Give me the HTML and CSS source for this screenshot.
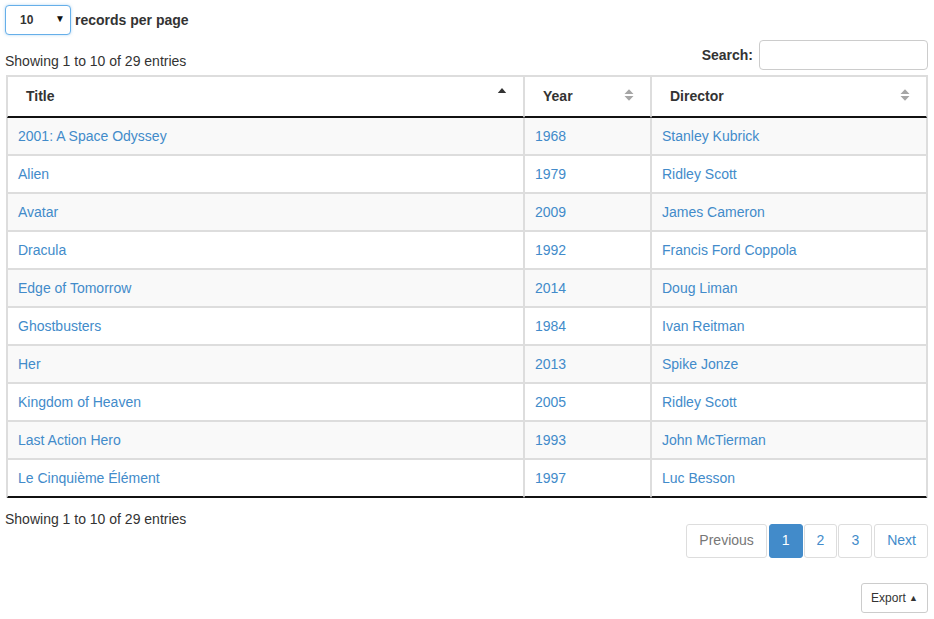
FILE: index.html
```html
<!DOCTYPE html>
<html>
<head>
<meta charset="utf-8">
<link rel="stylesheet" href="styles.css">
</head>
<body>
<div class="wrapper">
  <div class="length-row">
    <div class="select-wrap">
      <select class="length-select"><option>10</option><option>25</option><option>50</option></select>
      <span class="select-arrow">▼</span>
    </div>
    <span class="length-label">records per page</span>
  </div>
  <div class="top-row">
    <div class="info info-top">Showing 1 to 10 of 29 entries</div>
    <label class="search">Search: <input class="search-input" type="text"></label>
  </div>
  <table class="grid">
    <thead>
      <tr>
        <th class="col-title"><div class="th-in"><span>Title</span>
          <svg class="sort" width="10" height="12" viewBox="0 0 10 12"><path d="M0.8 6 L5 1 L9.2 6 Z" fill="#333"/></svg></div></th>
        <th class="col-year"><div class="th-in"><span>Year</span>
          <svg class="sort" width="10" height="12" viewBox="0 0 10 12"><path d="M0.5 5 L5 0.3 L9.5 5 Z M0.5 7 L5 11.7 L9.5 7 Z" fill="#a6a6a6"/></svg></div></th>
        <th class="col-director"><div class="th-in"><span>Director</span>
          <svg class="sort" width="10" height="12" viewBox="0 0 10 12"><path d="M0.5 5 L5 0.3 L9.5 5 Z M0.5 7 L5 11.7 L9.5 7 Z" fill="#a6a6a6"/></svg></div></th>
      </tr>
    </thead>
    <tbody>
      <tr class="odd"><td><a href="#">2001: A Space Odyssey</a></td><td><a href="#">1968</a></td><td><a href="#">Stanley Kubrick</a></td></tr>
      <tr><td><a href="#">Alien</a></td><td><a href="#">1979</a></td><td><a href="#">Ridley Scott</a></td></tr>
      <tr class="odd"><td><a href="#">Avatar</a></td><td><a href="#">2009</a></td><td><a href="#">James Cameron</a></td></tr>
      <tr><td><a href="#">Dracula</a></td><td><a href="#">1992</a></td><td><a href="#">Francis Ford Coppola</a></td></tr>
      <tr class="odd"><td><a href="#">Edge of Tomorrow</a></td><td><a href="#">2014</a></td><td><a href="#">Doug Liman</a></td></tr>
      <tr><td><a href="#">Ghostbusters</a></td><td><a href="#">1984</a></td><td><a href="#">Ivan Reitman</a></td></tr>
      <tr class="odd"><td><a href="#">Her</a></td><td><a href="#">2013</a></td><td><a href="#">Spike Jonze</a></td></tr>
      <tr><td><a href="#">Kingdom of Heaven</a></td><td><a href="#">2005</a></td><td><a href="#">Ridley Scott</a></td></tr>
      <tr class="odd"><td><a href="#">Last Action Hero</a></td><td><a href="#">1993</a></td><td><a href="#">John McTierman</a></td></tr>
      <tr class="last"><td><a href="#">Le Cinquième Élément</a></td><td><a href="#">1997</a></td><td><a href="#">Luc Besson</a></td></tr>
    </tbody>
  </table>
  <div class="bottom-row">
    <div class="info info-bottom">Showing 1 to 10 of 29 entries</div>
    <ul class="pagination">
      <li class="page disabled">Previous</li>
      <li class="page active">1</li>
      <li class="page">2</li>
      <li class="page">3</li>
      <li class="page next">Next</li>
    </ul>
  </div>
  <div class="export-row">
    <button class="export-btn">Export <span class="caret">▲</span></button>
  </div>
</div>
</body>
</html>
```

FILE: styles.css
```css
* { box-sizing: border-box; }
html, body { margin: 0; padding: 0; background: #fff; }
body {
  font-family: "Liberation Sans", Arial, sans-serif;
  font-size: 14px;
  line-height: 20px;
  color: #333;
}
.wrapper { padding: 5px 6px 0 5px; width: 934px; }

.length-row { display: flex; align-items: center; height: 30px; }
.select-wrap { position: relative; width: 66px; height: 30px; }
.length-select {
  appearance: none;
  -webkit-appearance: none;
  width: 66px;
  height: 30px;
  border: 1px solid #66afe9;
  border-radius: 4px;
  box-shadow: 0 0 3px rgba(102,175,233,0.5);
  background: #fff;
  font-family: "Liberation Sans", Arial, sans-serif;
  font-size: 12px;
  font-weight: bold;
  color: #333;
  padding: 0 0 0 14px;
  outline: none;
}
.select-arrow {
  position: absolute;
  right: 6px;
  top: 8px;
  font-size: 10px;
  line-height: 12px;
  color: #111;
  pointer-events: none;
}
.length-label { font-weight: bold; margin-left: 4px; }

.top-row { display: flex; justify-content: space-between; align-items: flex-start; margin-top: 5px; }
.info-top { padding-top: 11px; }
.search { font-weight: bold; display: flex; align-items: center; gap: 6px; margin-top: -1px; }
.search-input {
  width: 169px;
  height: 30px;
  margin-top: 1px;
  border: 1px solid #ccc;
  border-radius: 4px;
  font-size: 12px;
  padding: 5px 10px;
  outline: none;
}

.grid {
  margin: 4px 0 0 1px;
  width: 922px;
  table-layout: fixed;
  border-collapse: separate;
  border-spacing: 0;
  border: 1px solid #ddd;
  border-bottom: 0;
}
.grid th, .grid td {
  border: 1px solid #ddd;
  text-align: left;
}
.grid th {
  font-weight: bold;
  padding: 9px 16px 10px 18px;
  border-bottom: 2px solid #111;
}
.col-title { width: 517px; }
.col-year { width: 127px; }
.col-director { width: 276px; }
.th-in { display: flex; justify-content: space-between; align-items: center; }
.sort { display: block; margin-top: -3px; }
.col-title .sort { margin-top: -6px; }
.grid td { padding: 8px 10px; border-top: 0; }
.grid tbody tr:not(:first-child) td { border-top: 1px solid #ddd; }
.grid tr.odd td { background: #f9f9f9; }
.grid tr.last td { border-bottom: 2px solid #111; }
.grid a { color: #428bca; text-decoration: none; }

.bottom-row { display: flex; justify-content: space-between; align-items: flex-start; }
.info-bottom { padding-top: 11px; }
.pagination { list-style: none; margin: 26px 0 0 0; padding: 0; display: flex; gap: 1px; }
.page {
  height: 34px;
  padding: 5px 12px 7px;
  border: 1px solid #ddd;
  border-radius: 3px;
  color: #428bca;
  background: #fff;
}
.page.next { padding-right: 11px; margin-left: 1px; }
.page.disabled { color: #777; }
.page.active { background: #428bca; border-color: #428bca; color: #fff; margin-left: 1px; }

.export-row { display: flex; justify-content: flex-end; margin-top: 25px; }
.export-btn {
  height: 30px;
  padding: 0 9px 0 9px;
  border: 1px solid #ccc;
  border-radius: 3px;
  background: #fff;
  font-family: "Liberation Sans", Arial, sans-serif;
  font-size: 12px;
  color: #333;
}
.caret { font-size: 9px; vertical-align: 1px; }
```
